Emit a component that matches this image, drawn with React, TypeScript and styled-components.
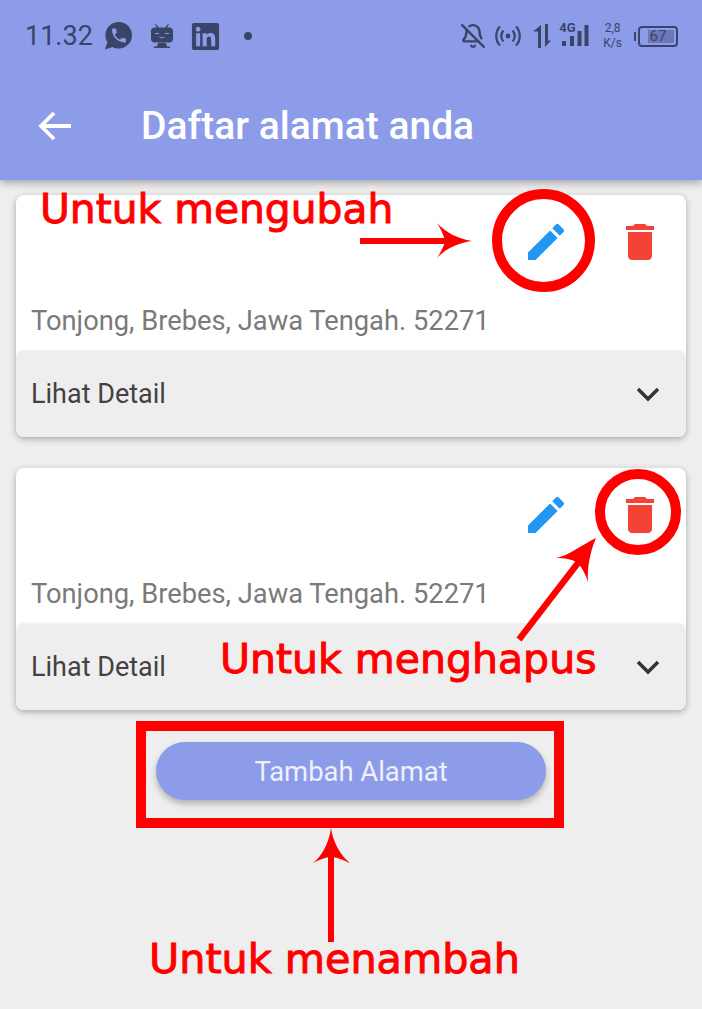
import React from "react";
import styled, { createGlobalStyle } from "styled-components";
import { FaLinkedin } from "react-icons/fa";
import { BellOff } from "lucide-react";

const GlobalStyle = createGlobalStyle`
  html, body {
    margin: 0;
    padding: 0;
    background: #eeeeee;
  }
  * {
    box-sizing: border-box;
  }
`;

const ADDRESS = "Tonjong, Brebes, Jawa Tengah. 52271";

const EditIcon = () => (
  <svg width="48" height="48" viewBox="0 0 24 24" fill="#2196f3">
    <path d="M3 17.25V21h3.75L17.81 9.94l-3.75-3.75L3 17.25zM20.71 7.04a.996.996 0 0 0 0-1.41l-2.34-2.34a.996.996 0 0 0-1.41 0l-1.83 1.83 3.75 3.75 1.83-1.83z" />
  </svg>
);

const TrashIcon = () => (
  <svg width="48" height="48" viewBox="0 0 24 24" fill="#f44336">
    <path d="M6 19c0 1.1.9 2 2 2h8c1.1 0 2-.9 2-2V7H6v12zM19 4h-3.5l-1-1h-5l-1 1H5v2h14V4z" />
  </svg>
);

const Chevron = () => (
  <svg width="24" height="16" viewBox="0 0 24 16" fill="none" stroke="#333333" strokeWidth="3.4">
    <path d="M2 3l10 10L22 3" />
  </svg>
);

const WhatsappIcon = () => (
  <svg width="27" height="28" viewBox="0 0 27 28">
    <path
      fill="#3a4468"
      d="M13.700 0C21 0 27 5.900 27 13.200S21 26.400 13.700 26.400c-2.200 0-4.300-.5-6.100-1.500L0 27.500l2.400-7.300C1 18.100.4 15.700.4 13.200.4 5.900 6.400 0 13.700 0z"
    />
    <path
      fill="#8c9ce8"
      transform="translate(4.600 4.200) scale(.78)"
      d="M6.600 10.800c1.400 2.800 3.800 5.100 6.600 6.600l2.200-2.200c.3-.3.700-.4 1-.2 1.100.4 2.300.6 3.600.6.600 0 1 .4 1 1V20c0 .6-.4 1-1 1C10.600 21 3 13.400 3 4c0-.6.4-1 1-1h3.500c.6 0 1 .4 1 1 0 1.300.2 2.500.6 3.600.1.300 0 .7-.2 1z"
    />
  </svg>
);

const RobotIcon = () => (
  <svg width="24" height="26" viewBox="0 0 24 26" fill="#3a4468">
    <path d="M6 1l3 3.500h6L18 1l1 .8-2 2.700h2.500c2 0 3.500 1.500 3.500 3.500v8c0 2-1.500 3.500-3.500 3.500h-15C2.500 19.500 1 18 1 16V8c0-2 1.500-3.500 3.500-3.500H7L5 1.800z" />
    <path d="M8 20h8l1 3.500h3V25H4v-1.500h3z" />
    <path d="M5 10.500h4M15 10.500h4M9.500 14c1.500 1 3.500 1 5 0" stroke="#8c9ce8" strokeWidth="1" fill="none" />
  </svg>
);

const HotspotIcon = () => (
  <svg width="26" height="24" viewBox="0 0 26 24" fill="none" stroke="#3a4468" strokeWidth="2.200">
    <circle cx="13" cy="12" r="2.400" fill="#3a4468" stroke="none" />
    <path d="M8.500 6.500c-3 3-3 8 0 11M17.500 6.500c3 3 3 8 0 11" />
    <path d="M5 2.500c-5 5-5 14 0 19M21 2.500c5 5 5 14 0 19" />
  </svg>
);

const DataArrows = () => (
  <svg width="18" height="24" viewBox="0 0 18 24" fill="#3a4468">
    <path d="M0 7.500L8 1v23H5V7.500zM12 0h3v16.500h3L12 23z" />
  </svg>
);

const SignalBars = () => (
  <SignalWrap>
    <SignalLabel>4G</SignalLabel>
    <svg width="30" height="24" viewBox="0 0 30 24" fill="#3a4468">
      <rect x="3" y="17" width="4" height="5" />
      <rect x="11" y="12" width="4" height="10" />
      <rect x="18.500" y="7" width="4" height="15" />
      <rect x="25.500" y="1" width="4" height="21" />
    </svg>
  </SignalWrap>
);

const Annotations = () => (
  <AnnotationSvg viewBox="0 0 702 1009">
    <g fill="#ff0000">
      <rect x="360" y="238" width="95" height="6" />
      <path d="M472 241C458 243 445 249 437 258C441 252 444 246 445 241C444 236 441 229 437 223C445 232 458 239 472 241z" />
      <path d="M516.500 637.500L577 559L582 563L521.500 641.500z" />
      <path d="M596 538C583 544 568 556 556 558C564 558 572 559 578 563C582 568 586 575 588 582C587 568 590 552 596 538z" />
      <rect x="328" y="850" width="6" height="92" />
      <path d="M331 828C333 842 340 855 350 863C343 860 337 857 331 857C325 857 319 860 313 863C323 855 329 842 331 828z" />
    </g>
    <g fill="none" stroke="#ff0000" strokeWidth="10">
      <circle cx="543.500" cy="240.500" r="46.500" />
      <circle cx="638" cy="512" r="38" />
    </g>
  </AnnotationSvg>
);

const AddressCard = () => (
  <Card>
    <CardTop>
      <ActionRow>
        <EditIcon />
        <TrashIcon />
      </ActionRow>
      <AddressText>{ADDRESS}</AddressText>
    </CardTop>
    <DetailBar>
      <DetailLabel>Lihat Detail</DetailLabel>
      <Chevron />
    </DetailBar>
  </Card>
);

export default function App() {
  return (
    <Root>
      <GlobalStyle />
      <Header>
        <StatusBar>
          <StatusGroup>
            <Clock>11.32</Clock>
            <Slot $left={0}>
              <WhatsappIcon />
            </Slot>
            <Slot $left={6}>
              <RobotIcon />
            </Slot>
            <Slot $left={4}>
              <FaLinkedin size={31} color="#3a4468" />
            </Slot>
            <Dot />
          </StatusGroup>
          <StatusGroupRight>
            <Slot $left={0}>
              <BellOff size={26} color="#3a4468" strokeWidth={2.2} />
            </Slot>
            <Slot $left={-1}>
              <HotspotIcon />
            </Slot>
            <Slot $left={2}>
              <DataArrows />
            </Slot>
            <Slot $left={-2}>
              <SignalBars />
            </Slot>
            <Slot $left={4}>
              <Speed>
                2,8
                <br />
                K/s
              </Speed>
            </Slot>
            <Slot $left={6}>
              <Battery>
                <BatteryFill />
                <BatteryText>67</BatteryText>
              </Battery>
            </Slot>
          </StatusGroupRight>
        </StatusBar>
        <Toolbar>
          <svg width="34" height="30" viewBox="0 0 34 30" fill="none" stroke="#ffffff" strokeWidth="3.800">
            <path d="M33 15H4M16 2L3 15l13 13" />
          </svg>
          <Title>Daftar alamat anda</Title>
        </Toolbar>
      </Header>
      <CardList>
        <AddressCard />
        <AddressCard />
      </CardList>
      <AddButton>Tambah Alamat</AddButton>
      <Annotations />
      <RedBox />
      <Note $left={40} $top={180} $size={40.8}>Untuk mengubah</Note>
      <Note $left={220} $top={630} $size={41}>Untuk menghapus</Note>
      <Note $left={149} $top={930} $size={41.3}>Untuk menambah</Note>
    </Root>
  );
}

const Root = styled.div`
  position: relative;
  width: 702px;
  height: 1009px;
  overflow: hidden;
  background: #eeeeee;
  font-family: Roboto, sans-serif;
`;

const Header = styled.header`
  height: 180px;
  background: #8c9ce8;
  box-shadow: 0 3px 8px rgba(0, 0, 0, 0.3);
  position: relative;
  z-index: 1;
`;

const StatusBar = styled.div`
  height: 72px;
  display: flex;
  align-items: center;
  justify-content: space-between;
  padding: 0 24px 0 25px;
`;

const StatusGroup = styled.div`
  display: flex;
  align-items: center;
  gap: 12px;
`;

const StatusGroupRight = styled.div`
  display: flex;
  align-items: center;
  gap: 10px;
`;

const Slot = styled.div<{ $left: number }>`
  display: flex;
  align-items: center;
  margin-left: ${(p) => p.$left}px;
`;

const Clock = styled.span`
  font-size: 27px;
  color: #3a4468;
`;

const Dot = styled.span`
  width: 8px;
  height: 8px;
  border-radius: 50%;
  background: #3a4468;
  margin-left: 11px;
`;

const SignalWrap = styled.div`
  position: relative;
  width: 30px;
  height: 24px;
`;

const SignalLabel = styled.span`
  position: absolute;
  left: 0;
  top: -3px;
  font-size: 13px;
  font-weight: 700;
  line-height: 13px;
  color: #3a4468;
`;

const Speed = styled.span`
  font-size: 12px;
  line-height: 15px;
  color: #3a4468;
  text-align: center;
`;

const Battery = styled.div`
  position: relative;
  width: 40px;
  height: 21px;
  border: 2px solid #3a4468;
  border-radius: 4px;
  &::before {
    content: "";
    position: absolute;
    left: -6px;
    top: 4px;
    width: 2px;
    height: 9px;
    background: #3a4468;
  }
`;

const BatteryFill = styled.div`
  position: absolute;
  left: 8px;
  top: 2px;
  bottom: 2px;
  width: 26px;
  background: #6a78b8;
`;

const BatteryText = styled.span`
  position: absolute;
  inset: 0;
  text-align: center;
  font-size: 15px;
  line-height: 17px;
  color: #3a4468;
`;

const Toolbar = styled.div`
  height: 108px;
  padding-left: 38px;
  display: flex;
  align-items: center;
  gap: 69px;
`;

const Title = styled.h1`
  margin: 0;
  font-size: 39px;
  font-weight: 500;
  color: #ffffff;
`;

const CardList = styled.div`
  display: flex;
  flex-direction: column;
  gap: 31px;
  padding: 15px 16px 0;
`;

const Card = styled.section`
  height: 242px;
  display: flex;
  flex-direction: column;
  background: #ffffff;
  border-radius: 8px;
  box-shadow: 0 2px 6px rgba(0, 0, 0, 0.3);
  overflow: hidden;
`;

const CardTop = styled.div`
  flex: 1;
  padding: 23px 22px 0 15px;
`;

const ActionRow = styled.div`
  display: flex;
  justify-content: flex-end;
  gap: 46px;
  height: 48px;
`;

const AddressText = styled.p`
  margin: 39px 0 0;
  font-size: 27.3px;
  line-height: 32px;
  color: #7a7a7a;
`;

const DetailBar = styled.div`
  height: 86px;
  display: flex;
  align-items: center;
  justify-content: space-between;
  padding: 0 26px 0 15px;
  background: #eeeeee;
  border-radius: 8px 8px 0 0;
  box-shadow: 0 -1px 2px rgba(0, 0, 0, 0.08);
`;

const DetailLabel = styled.span`
  font-size: 27px;
  color: #424242;
`;

const AddButton = styled.button`
  display: block;
  width: 390px;
  height: 58px;
  margin: 32px auto 0;
  padding: 1px 0 0;
  border: none;
  border-radius: 29px;
  background: #8c9ce8;
  box-shadow: 0 4px 6px rgba(0, 0, 0, 0.25);
  color: #eef0fb;
  font-family: Roboto, sans-serif;
  font-size: 27.4px;
`;

const AnnotationSvg = styled.svg`
  position: absolute;
  inset: 0;
  width: 702px;
  height: 1009px;
  z-index: 2;
`;

const RedBox = styled.div`
  position: absolute;
  left: 136px;
  top: 721px;
  width: 428px;
  height: 107px;
  border: 10px solid #ff0000;
  z-index: 2;
`;

const Note = styled.span<{ $left: number; $top: number; $size: number }>`
  position: absolute;
  left: ${(p) => p.$left}px;
  top: ${(p) => p.$top}px;
  z-index: 3;
  font-family: "DejaVu Sans", sans-serif;
  font-size: ${(p) => p.$size}px;
  line-height: 58px;
  color: #ff0000;
  -webkit-text-stroke: 1px #ff0000;
  white-space: nowrap;
`;
